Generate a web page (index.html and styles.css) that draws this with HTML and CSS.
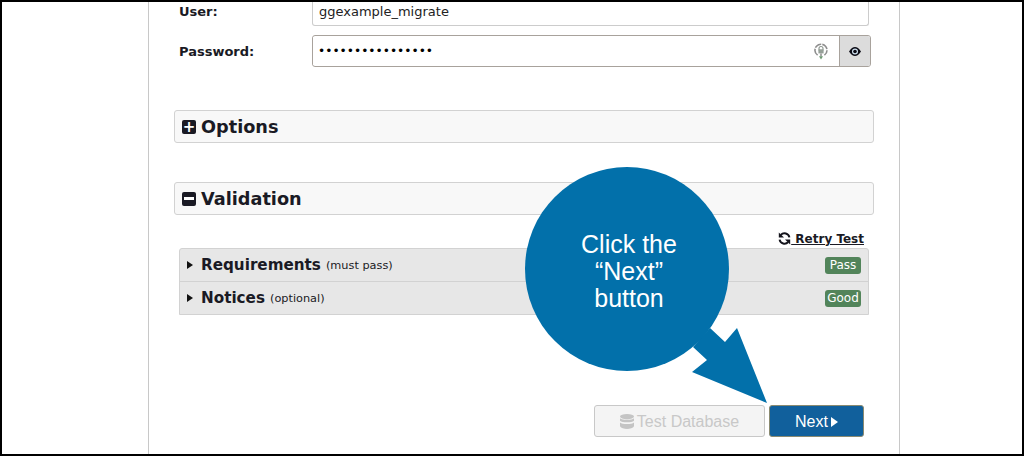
FILE: index.html
```html
<!DOCTYPE html>
<html lang="en">
<head>
    <meta charset="UTF-8">
    <meta name="viewport" content="width=device-width, initial-scale=1.0">
    <title>Install - Step 2</title>
    <link rel="stylesheet" href="styles.css">
</head>
<body>
    <div class="frame">
        <div class="panel">
            <form class="form">
                <div class="field field-user">
                    <label for="user">User:</label>
                    <input type="text" id="user" value="ggexample_migrate">
                </div>
                <div class="field field-pass">
                    <label for="pass">Password:</label>
                    <div class="pass-group">
                        <div class="pass-input">
                            <input type="password" id="pass" value="ggexamplepasswd1">
                            <svg class="lock-icon" width="14" height="18" viewBox="0 0 14 18">
                                <path d="M3.6 13.2A6 6 0 1 1 10.4 13.2" fill="none" stroke="#8e8e8e" stroke-width="1.6" stroke-dasharray="7 1"/>
                                <path d="M5 6.5a2 2 0 0 1 4 0V8H5z" fill="none" stroke="#8c968e" stroke-width="1.1"/>
                                <rect x="4.4" y="7.6" width="5.2" height="3.8" fill="#96a098"/>
                                <path d="M7 11.5v3" stroke="#8e8e8e" stroke-width="1.5"/>
                                <path d="M5 14.2 7 17.5l2-3.3z" fill="#6f9a74"/>
                            </svg>
                        </div>
                        <button type="button" class="eye-btn">
                            <svg width="12" height="9" viewBox="0 0 12 9">
                                <path d="M0 4.5C2 1.4 4 0 6 0s4 1.4 6 4.5C10 7.6 8 9 6 9S2 7.6 0 4.5z" fill="#0a0a14"/>
                                <circle cx="6" cy="4.5" r="3" fill="#cfe0ee"/>
                                <circle cx="6" cy="4.5" r="1.8" fill="#0a0a14"/>
                            </svg>
                        </button>
                    </div>
                </div>
            </form>

            <div class="section-head section-options">
                <span class="box-icon">+</span>
                <span>Options</span>
            </div>

            <div class="section-head section-validation">
                <span class="box-icon box-minus"></span>
                <span>Validation</span>
            </div>

            <div class="retry">
                <a href="#" class="retry-link">
                    <svg width="13" height="13" viewBox="0 0 13 13">
                        <path d="M11.4 5.4A5 5 0 0 0 2.8 3" fill="none" stroke="#14141c" stroke-width="2"/>
                        <path d="M.8.4v5.2H6z" fill="#14141c"/>
                        <path d="M1.6 7.6a5 5 0 0 0 8.6 2.4" fill="none" stroke="#14141c" stroke-width="2"/>
                        <path d="M12.2 12.6V7.4H7z" fill="#14141c"/>
                    </svg>
                    <span>&nbsp;Retry Test</span>
                </a>
            </div>

            <div class="checks">
                <div class="check-row">
                    <span class="caret"></span>
                    <span class="check-name">Requirements</span>
                    <span class="check-note">(must pass)</span>
                    <span class="badge">Pass</span>
                </div>
                <div class="check-row">
                    <span class="caret"></span>
                    <span class="check-name">Notices</span>
                    <span class="check-note">(optional)</span>
                    <span class="badge">Good</span>
                </div>
            </div>

            <div class="actions">
                <button type="button" class="btn btn-test" disabled>
                    <svg width="14" height="15" viewBox="0 0 14 15">
                        <ellipse cx="7" cy="2.6" rx="7" ry="2.6" fill="#c4c4c4"/>
                        <path d="M0 4.2c2 2 12 2 14 0v2.6c-2 2-12 2-14 0zM0 8.4c2 2 12 2 14 0v3.8c-2 3.6-12 3.6-14 0z" fill="#c4c4c4"/>
                    </svg>
                    Test Database
                </button>
                <button type="button" class="btn btn-next">Next<span class="next-caret"></span></button>
            </div>
        </div>

        <!-- callout over the page -->
        <div class="callout">
            <svg class="callout-tail" width="90" height="90" viewBox="0 0 90 90">
                <polygon points="20,0 35,14 47,0 77,75 2,44 17,32 3,19" fill="#0270aa"/>
            </svg>
            <div class="callout-circle">Click the<br>“Next”<br>button</div>
        </div>
    </div>
</body>
</html>
```

FILE: styles.css
```css
* {
    box-sizing: border-box;
}

body {
    margin: 0;
    font-family: "DejaVu Sans", Verdana, sans-serif;
    color: #1a1a24;
    background: #fff;
}

/* black edge of the picture */
.frame {
    position: relative;
    width: 1024px;
    height: 456px;
    border: 2px solid #000;
    overflow: hidden;
    background: #fff;
}

.panel {
    width: 752px;
    height: 452px;
    margin-left: 146px;
    padding: 0 25px;
    border-left: 1px solid #c8c8c8;
    border-right: 1px solid #c8c8c8;
}

/* Form */
.field {
    display: flex;
    align-items: center;
    padding-left: 5px;
}

.field label {
    width: 133px;
    font-size: 13px;
    font-weight: bold;
}

.field input {
    font-family: "DejaVu Sans", Verdana, sans-serif;
    font-size: 13px;
    color: #222;
    outline: none;
    background: #fff;
}

.field-user {
    height: 24px;
    margin-right: 5px;
}

.field-user label {
    margin-top: -6px;
}

.field-user input {
    flex: 1;
    height: 24px;
    padding: 0 6px 5px;
    border: 1px solid #ccc;
    border-top: 0;
    border-radius: 0 0 3px 3px;
}

.field-pass {
    height: 32px;
    margin-top: 9px;
    margin-right: 3px;
}

.pass-group {
    flex: 1;
    display: flex;
    height: 32px;
    border: 1px solid #a8a29c;
    border-radius: 3px;
}

.pass-input {
    flex: 1;
    display: flex;
    align-items: center;
    justify-content: space-between;
    padding-right: 11px;
}

.field-pass input {
    flex: 1;
    height: 28px;
    padding: 0 5px;
    border: 0;
    font-size: 12.2px;
    color: #000;
}

.eye-btn {
    width: 31px;
    padding: 0;
    border: 0;
    border-left: 1px solid #a8a29c;
    border-radius: 0 2px 2px 0;
    background: #dcdcdc;
}

/* Section headers */
.section-head {
    display: flex;
    align-items: center;
    gap: 5px;
    height: 33px;
    padding-left: 7px;
    border: 1px solid #d2d2d2;
    border-radius: 3px;
    background: #f8f8f8;
    font-size: 17.7px;
    font-weight: bold;
}

.section-options {
    margin-top: 43px;
}

.section-validation {
    margin-top: 39px;
}

.box-icon {
    display: flex;
    align-items: center;
    justify-content: center;
    width: 14px;
    height: 14px;
    border-radius: 2px;
    background: #1a1a24;
    color: #fff;
    font-size: 15px;
    line-height: 14px;
}

.box-minus::before {
    content: "";
    width: 10px;
    height: 3px;
    background: #fff;
}

/* Retry link */
.retry {
    display: flex;
    justify-content: flex-end;
    height: 33px;
    padding: 16px 10px 0 0;
}

.retry-link {
    display: flex;
    align-items: center;
    height: 15px;
    color: #1a1a24;
    font-size: 12px;
    font-weight: bold;
    text-decoration: none;
}

.retry-link span {
    text-decoration: underline;
}

/* Validation rows */
.checks {
    margin: 0 5px;
    border: 1px solid #d2d2d2;
    border-radius: 3px 3px 0 0;
    background: #e7e7e7;
}

.check-row {
    display: flex;
    align-items: center;
    height: 33px;
    padding: 0 7px;
}

.check-row:first-child {
    height: 32px;
}

.check-row + .check-row {
    border-top: 1px solid #d2d2d2;
}

.check-name {
    margin-top: -1px;
    font-size: 15.2px;
    font-weight: bold;
}

.check-note {
    margin-left: 5px;
    font-size: 11.3px;
}

.caret {
    width: 0;
    height: 0;
    margin-right: 8px;
    border-top: 4.5px solid transparent;
    border-bottom: 4.5px solid transparent;
    border-left: 6px solid #111;
}

.badge {
    width: 36px;
    margin-left: auto;
    border-radius: 3px;
    background: #52845a;
    color: #fff;
    font-size: 12px;
    line-height: 17px;
    text-align: center;
}

/* Bottom buttons */
.actions {
    display: flex;
    justify-content: flex-end;
    gap: 4px;
    margin-top: 90px;
    padding-right: 10px;
}

.btn {
    display: flex;
    align-items: center;
    justify-content: center;
    height: 32px;
    padding: 1px 0 0;
    border-radius: 3px;
    font-family: "Liberation Sans", Arial, sans-serif;
    font-size: 16px;
}

.btn-test {
    gap: 3px;
    width: 171px;
    border: 1px solid #c8c8c8;
    background: #f4f4f4;
    color: #c8c8c8;
}

.btn-next {
    width: 95px;
    border: 1px solid #8a8a70;
    background: #11609c;
    color: #fff;
}

.next-caret {
    width: 0;
    height: 0;
    margin-left: 3px;
    border-top: 5px solid transparent;
    border-bottom: 5px solid transparent;
    border-left: 7px solid #fff;
}

/* Callout */
.callout {
    position: absolute;
    left: 523px;
    top: 165px;
    width: 204px;
    height: 204px;
}

.callout-circle {
    display: flex;
    align-items: center;
    justify-content: center;
    position: relative;
    width: 204px;
    height: 204px;
    padding: 4px 0 0 4px;
    border-radius: 50%;
    background: #0270aa;
    color: #fff;
    font-family: "Liberation Sans", Arial, sans-serif;
    font-size: 25px;
    line-height: 27px;
    text-align: center;
}

.callout-tail {
    position: absolute;
    left: 165px;
    top: 161px;
}
```
